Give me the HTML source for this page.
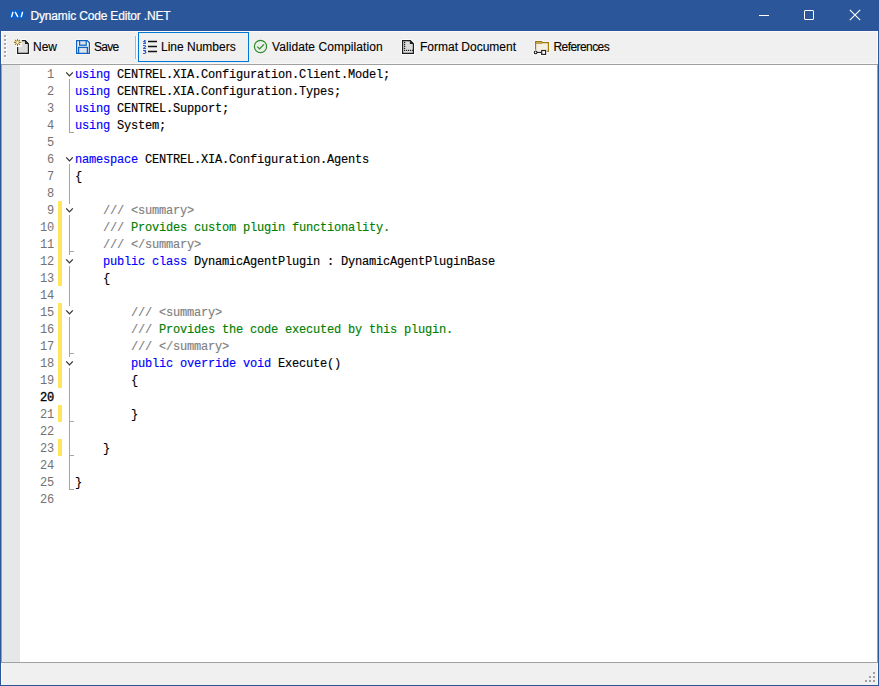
<!DOCTYPE html>
<html><head><meta charset="utf-8">
<style>
*{margin:0;padding:0;box-sizing:border-box}
html,body{width:879px;height:686px;overflow:hidden;background:#2B579A}
body{position:relative;font-family:"Liberation Sans",sans-serif}
.abs{position:absolute}
#title{left:0;top:0;width:879px;height:31px;background:#2B579A}
#title .t{left:30.5px;top:8px;font-size:12px;letter-spacing:-0.17px;color:#fff;-webkit-text-stroke:0.2px #fff;white-space:pre;line-height:16px}
#tool{left:1px;top:31px;width:877px;height:33px;background:#F0F0F0;border-top:1px solid #FAFAFA;border-bottom:1px solid #F7F7F7;border-left:1px solid #FBFBFB;border-right:1px solid #FBFBFB}
.tb{position:absolute;top:12px;font-size:12px;color:#000;-webkit-text-stroke:0.12px #000;white-space:pre;line-height:16px}
#edline{left:1px;top:64px;width:877px;height:1px;background:#A0A0A0}
#editor{left:1px;top:64px;width:877px;height:599px;background:#fff;border:1px solid #A0A0A0;border-right:1px solid #A0A0A0}
#margin{left:2px;top:65px;width:18px;height:597px;background:#E6E7E8}
#status{left:1px;top:663px;width:877px;height:22px;background:#F0F0F0;border-left:1px solid #FAFAFA;border-right:1px solid #FAFAFA}
.ln{position:absolute;left:19px;width:35px;text-align:right;font-family:"Liberation Mono",monospace;font-size:12px;letter-spacing:-0.2px;color:#727272;line-height:17px;height:17px}
.cl{position:absolute;left:75px;-webkit-text-stroke:0.15px currentColor;font-family:"Liberation Mono",monospace;font-size:12px;letter-spacing:-0.2px;color:#000;line-height:17px;height:17px;white-space:pre}
.k{color:#0000FF}
.c{color:#808080}
.g{color:#008000}
.yb{position:absolute;left:58px;width:4px;background:#FFE65A}
.vl{position:absolute;left:69px;width:1px;background:#A5A5A5}
.tk{position:absolute;left:69px;width:5px;height:1px;background:#A5A5A5}
.chev{position:absolute;left:65px;width:9px;height:7px}
</style></head><body>
<div id="title" class="abs">
  <svg class="abs" style="left:6px;top:6px" width="22" height="16" viewBox="0 0 22 16">
    <rect x="3.5" y="4" width="15.5" height="8.8" rx="2.8" fill="#0A5FC8"/>
    <path d="M5.6 10.6 L6.9 6.3 M9.4 6.3 L11.7 10.6 M15.3 10.6 L16.5 6.3" stroke="#fff" stroke-width="1.4" stroke-linecap="round"/>
  </svg>
  <div class="abs t">Dynamic Code Editor .NET</div>
  <div class="abs" style="left:759px;top:15px;width:10px;height:1px;background:#fff"></div>
  <div class="abs" style="left:804px;top:10px;width:10px;height:10px;border:1px solid #fff;border-radius:1px"></div>
  <svg class="abs" style="left:849px;top:9px" width="12" height="12" viewBox="0 0 12 12"><path d="M0.8 0.8 L11.2 11.2 M11.2 0.8 L0.8 11.2" stroke="#fff" stroke-width="1.1"/></svg>
</div>
<div id="tool" class="abs">
</div>
<!-- toolbar contents positioned relative to body -->
<div class="abs" style="left:5px;top:36px;width:2px;height:22px;background:repeating-linear-gradient(#FFFFFF 0 2px,transparent 2px 4px)"></div>
<div class="abs" style="left:4px;top:35px;width:2px;height:22px;background:repeating-linear-gradient(#A9A9A9 0 2px,transparent 2px 4px)"></div>
<!-- New icon -->
<svg class="abs" style="left:10px;top:36px" width="22" height="20" viewBox="10 36 22 20">
  <path d="M17.6 47 V53.4 H28.4 V43.6 L25.3 40.6 H21.6 V47 Z" fill="#fff" stroke="#fff" stroke-opacity="0.75" stroke-width="3.2"/>
  <path d="M17.5 39.2 V45.6 M14.3 42.4 H20.7 M15.2 40.1 L19.8 44.7 M19.8 40.1 L15.2 44.7" stroke="#fff" stroke-opacity="0.6" stroke-width="2.6" stroke-linecap="round"/>
  <path d="M17.6 47 V53.4 H28.4 V43.6 L25.3 40.6 H21.6 V47 Z" fill="#DCDCDC"/>
  <path d="M21.8 40.6 H25.3 L28.4 43.7 V53.4 H17.6 V47" fill="none" stroke="#1E1E1E" stroke-width="1.2"/>
  <path d="M25 40.2 L28.8 44 H25 Z" fill="#1E1E1E"/>
  <g stroke="#A87C00" stroke-width="1.1" stroke-linecap="round">
    <path d="M17.5 39.2 V45.6 M14.3 42.4 H20.7 M15.2 40.1 L19.8 44.7 M19.8 40.1 L15.2 44.7"/>
  </g>
  <circle cx="17.5" cy="42.4" r="1.3" fill="#F4F4F4"/>
</svg>
<div class="tb" style="left:33px;top:39px">New</div>
<!-- Save icon -->
<svg class="abs" style="left:72px;top:36px" width="20" height="20" viewBox="72 36 20 20">
  <path d="M76.6 40.6 H87.3 L89.4 42.7 V53.4 H76.6 Z" fill="none" stroke="#FFF8F0" stroke-opacity="0.8" stroke-width="3.2"/>
  <path d="M76.6 40.6 H87.3 L89.4 42.7 V53.4 H76.6 Z" fill="#F3F3F3" stroke="#0B63C4" stroke-width="1.25"/>
  <rect x="79.6" y="40.6" width="6.6" height="4.6" fill="#DDE3EC" stroke="#0B63C4" stroke-width="1.25"/>
  <rect x="78.6" y="47.4" width="8.8" height="6" fill="#DDE3EC" stroke="#0B63C4" stroke-width="1.25"/>
</svg>
<div class="tb" style="left:94px;top:39px;letter-spacing:-0.7px">Save</div>
<div class="abs" style="left:135px;top:36px;width:1px;height:23px;background:#B4B4B4"></div>
<div class="abs" style="left:136px;top:36px;width:1px;height:23px;background:#FCFCFC"></div>
<!-- Line Numbers checked button -->
<div class="abs" style="left:138px;top:32px;width:111px;height:30px;border:1px solid #0078D7;background:#F0F0F0"></div>
<svg class="abs" style="left:140px;top:38px" width="20" height="18" viewBox="140 38 20 18">
  <g fill="#2D5EC2"><rect x="144" y="40" width="1.6" height="1"/><rect x="143" y="41" width="2.6" height="1"/><rect x="144.3" y="42" width="1.4" height="1"/><rect x="143" y="43" width="3" height="1"/><rect x="143" y="45" width="2.6" height="1"/><rect x="144.8" y="46" width="1.4" height="1"/><rect x="143.6" y="47" width="1.6" height="1"/><rect x="143" y="48" width="3" height="1"/><rect x="143" y="50" width="3" height="1"/><rect x="144.4" y="51" width="1.6" height="1"/><rect x="145" y="52" width="1.4" height="1"/><rect x="143" y="53" width="2.6" height="1"/></g>
  <path d="M148 41.5 H157 M148 46.5 H157 M148 51.5 H157" stroke="#111" stroke-width="1.3"/>
</svg>
<div class="tb" style="left:161px;top:39px">Line Numbers</div>
<!-- Validate icon -->
<svg class="abs" style="left:253px;top:39px" width="16" height="16" viewBox="0 0 16 16">
  <circle cx="7.5" cy="7.5" r="6.1" fill="#E8F0E8" stroke="#2E8B2E" stroke-width="1.2"/>
  <path d="M4.3 7.6 L6.6 9.9 L10.9 5.4" fill="none" stroke="#2E8B2E" stroke-width="1.3"/>
</svg>
<div class="tb" style="left:272px;top:39px;letter-spacing:0.08px">Validate Compilation</div>
<!-- Format doc icon -->
<svg class="abs" style="left:398px;top:36px" width="20" height="20" viewBox="398 36 20 20">
  <path d="M402.6 40.6 H410.3 L413.4 43.7 V53.4 H402.6 Z" fill="none" stroke="#fff" stroke-opacity="0.8" stroke-width="3.2"/>
  <path d="M402.6 40.6 H410.3 L413.4 43.7 V53.4 H402.6 Z" fill="#DCDCDC" stroke="#1E1E1E" stroke-width="1.2"/>
  <path d="M409.9 40.1 L413.9 44.1 H409.9 Z" fill="#1E1E1E"/>
  <g fill="#1E1E1E">
    <rect x="404" y="41.8" width="1.2" height="1.2"/><rect x="404" y="43.8" width="1.2" height="1.2"/><rect x="404" y="45.8" width="1.2" height="1.2"/><rect x="404" y="47.8" width="1.2" height="1.2"/><rect x="404" y="49.8" width="1.2" height="1.2"/>
    <rect x="406" y="49.8" width="1.2" height="1.2"/><rect x="408" y="49.8" width="1.2" height="1.2"/><rect x="410" y="49.8" width="1.2" height="1.2"/><rect x="412" y="49.8" width="1.2" height="1.2"/>
  </g>
</svg>
<div class="tb" style="left:420px;top:39px">Format Document</div>
<!-- References icon -->
<svg class="abs" style="left:530px;top:36px" width="22" height="22" viewBox="530 36 22 22">
  <path d="M535.6 49.8 V41.6 H541.6 L542.4 42.6 H548.4 V51.3 H547.2 M535.6 52.4 H545.6" fill="none" stroke="#F6F8FF" stroke-opacity="0.9" stroke-width="3.2"/>
  <rect x="541.7" y="50.5" width="3.9" height="3.9" fill="none" stroke="#fff" stroke-opacity="0.9" stroke-width="3"/>
  <circle cx="535.6" cy="52.4" r="1.35" fill="none" stroke="#fff" stroke-opacity="0.9" stroke-width="3"/>
  <rect x="536" y="43.5" width="12" height="8" fill="#F3EFE3"/>
  <path d="M535.6 49.8 V41.6 H541.6 L542.4 42.6 H548.4 V51.3 H547.2" fill="none" stroke="#A07800" stroke-width="1.15"/>
  <path d="M535.6 43.1 H542.2" fill="none" stroke="#A07800" stroke-width="1.1"/>
  <circle cx="535.6" cy="52.4" r="1.35" fill="#fff" stroke="#1E1E1E" stroke-width="1.1"/>
  <path d="M537 52.4 H541.5" stroke="#1E1E1E" stroke-width="1.1"/>
  <rect x="541.7" y="50.5" width="3.9" height="3.9" fill="#fff" stroke="#1E1E1E" stroke-width="1.15"/>
</svg>
<div class="tb" style="left:553.5px;top:39px;letter-spacing:-0.58px">References</div>

<!-- Editor -->
<div id="editor" class="abs"></div>
<div id="margin" class="abs"></div>
<div id="status" class="abs"></div>
<!-- resize grip -->
<div class="abs" style="left:873px;top:672px;width:2px;height:2px;background:#A0A0A0"></div>
<div class="abs" style="left:869px;top:676px;width:2px;height:2px;background:#A0A0A0"></div>
<div class="abs" style="left:873px;top:676px;width:2px;height:2px;background:#A0A0A0"></div>
<div class="abs" style="left:865px;top:680px;width:2px;height:2px;background:#A0A0A0"></div>
<div class="abs" style="left:869px;top:680px;width:2px;height:2px;background:#A0A0A0"></div>
<div class="abs" style="left:873px;top:680px;width:2px;height:2px;background:#A0A0A0"></div>

<!-- yellow bars -->
<div class="yb" style="top:201px;height:85px"></div>
<div class="yb" style="top:303px;height:85px"></div>
<div class="yb" style="top:405px;height:17px"></div>
<div class="yb" style="top:439px;height:17px"></div>

<!-- fold lines -->
<div class="vl" style="top:79px;height:54px"></div><div class="tk" style="top:132px"></div>
<div class="vl" style="top:164px;height:40px"></div>
<div class="vl" style="top:215px;height:40px"></div><div class="tk" style="top:251px"></div>
<div class="vl" style="top:266px;height:40px"></div>
<div class="vl" style="top:317px;height:40px"></div>
<div class="vl" style="top:368px;height:122px"></div>
<div class="tk" style="top:353px"></div>
<div class="tk" style="top:421px"></div>
<div class="tk" style="top:455px"></div>
<div class="tk" style="top:489px"></div>

<!-- chevrons at lines 1,6,9,12,15,18 -->
<svg class="chev" style="top:71px" viewBox="0 0 9 7"><path d="M1.2 1.3 L4.5 4.9 L7.8 1.3" fill="none" stroke="#333" stroke-width="1.25"/></svg>
<svg class="chev" style="top:156px" viewBox="0 0 9 7"><path d="M1.2 1.3 L4.5 4.9 L7.8 1.3" fill="none" stroke="#333" stroke-width="1.25"/></svg>
<svg class="chev" style="top:207px" viewBox="0 0 9 7"><path d="M1.2 1.3 L4.5 4.9 L7.8 1.3" fill="none" stroke="#333" stroke-width="1.25"/></svg>
<svg class="chev" style="top:258px" viewBox="0 0 9 7"><path d="M1.2 1.3 L4.5 4.9 L7.8 1.3" fill="none" stroke="#333" stroke-width="1.25"/></svg>
<svg class="chev" style="top:309px" viewBox="0 0 9 7"><path d="M1.2 1.3 L4.5 4.9 L7.8 1.3" fill="none" stroke="#333" stroke-width="1.25"/></svg>
<svg class="chev" style="top:360px" viewBox="0 0 9 7"><path d="M1.2 1.3 L4.5 4.9 L7.8 1.3" fill="none" stroke="#333" stroke-width="1.25"/></svg>

<!-- line numbers -->
<div class="ln" style="top:67px">1</div>
<div class="ln" style="top:84px">2</div>
<div class="ln" style="top:101px">3</div>
<div class="ln" style="top:118px">4</div>
<div class="ln" style="top:135px">5</div>
<div class="ln" style="top:152px">6</div>
<div class="ln" style="top:169px">7</div>
<div class="ln" style="top:186px">8</div>
<div class="ln" style="top:203px">9</div>
<div class="ln" style="top:220px">10</div>
<div class="ln" style="top:237px">11</div>
<div class="ln" style="top:254px">12</div>
<div class="ln" style="top:271px">13</div>
<div class="ln" style="top:288px">14</div>
<div class="ln" style="top:305px">15</div>
<div class="ln" style="top:322px">16</div>
<div class="ln" style="top:339px">17</div>
<div class="ln" style="top:356px">18</div>
<div class="ln" style="top:373px">19</div>
<div class="ln" style="top:390px;color:#000;-webkit-text-stroke:0.35px #000">20</div>
<div class="ln" style="top:407px">21</div>
<div class="ln" style="top:424px">22</div>
<div class="ln" style="top:441px">23</div>
<div class="ln" style="top:458px">24</div>
<div class="ln" style="top:475px">25</div>
<div class="ln" style="top:492px">26</div>

<!-- code -->
<div class="cl" style="top:67px"><span class="k">using</span> CENTREL.XIA.Configuration.Client.Model;</div>
<div class="cl" style="top:84px"><span class="k">using</span> CENTREL.XIA.Configuration.Types;</div>
<div class="cl" style="top:101px"><span class="k">using</span> CENTREL.Support;</div>
<div class="cl" style="top:118px"><span class="k">using</span> System;</div>
<div class="cl" style="top:152px"><span class="k">namespace</span> CENTREL.XIA.Configuration.Agents</div>
<div class="cl" style="top:169px">{</div>
<div class="cl" style="top:203px">    <span class="c">/// &lt;summary&gt;</span></div>
<div class="cl" style="top:220px">    <span class="c">///</span><span class="g"> Provides custom plugin functionality.</span></div>
<div class="cl" style="top:237px">    <span class="c">/// &lt;/summary&gt;</span></div>
<div class="cl" style="top:254px">    <span class="k">public</span> <span class="k">class</span> DynamicAgentPlugin : DynamicAgentPluginBase</div>
<div class="cl" style="top:271px">    {</div>
<div class="cl" style="top:305px">        <span class="c">/// &lt;summary&gt;</span></div>
<div class="cl" style="top:322px">        <span class="c">///</span><span class="g"> Provides the code executed by this plugin.</span></div>
<div class="cl" style="top:339px">        <span class="c">/// &lt;/summary&gt;</span></div>
<div class="cl" style="top:356px">        <span class="k">public</span> <span class="k">override</span> <span class="k">void</span> Execute()</div>
<div class="cl" style="top:373px">        {</div>
<div class="cl" style="top:407px">        }</div>
<div class="cl" style="top:441px">    }</div>
<div class="cl" style="top:475px">}</div>
</body></html>
